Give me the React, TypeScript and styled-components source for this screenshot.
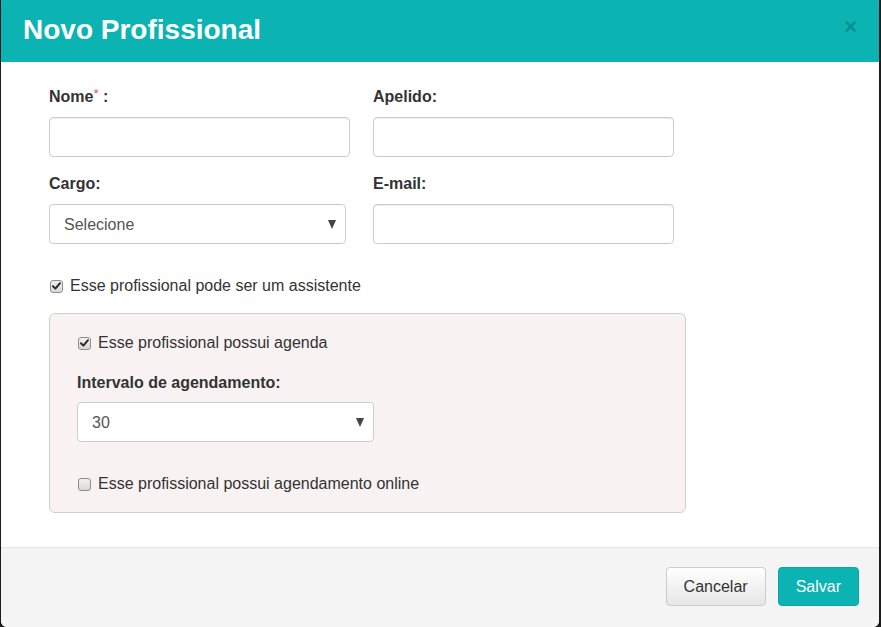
import React from "react";
import styled, { createGlobalStyle } from "styled-components";

const Global = createGlobalStyle`
  html, body { margin: 0; padding: 0; background: #1c1c1c; }
  body { font-family: "Liberation Sans", Arial, sans-serif; color: #333; overflow: hidden; }
  * { box-sizing: border-box; }
`;

const Modal = styled.div`
  width: 878px;
  height: 630px;
  margin: -3px 0 0 1px;
  background: #fff;
  border-radius: 6px;
  overflow: hidden;
  display: flex;
  flex-direction: column;
`;

const Header = styled.div`
  height: 65px;
  flex: none;
  padding: 1px 22px 0 22px;
  background: #0bb3b3;
  display: flex;
  align-items: center;
  justify-content: space-between;
`;

const Title = styled.h1`
  margin: 0;
  font-size: 28px;
  font-weight: bold;
  color: #fff;
`;

const Close = styled.button`
  border: 0;
  background: none;
  padding: 0;
  margin-right: 0;
  margin-top: -6px;
  font-family: "Liberation Sans", Arial, sans-serif;
  font-size: 22px;
  font-weight: bold;
  line-height: 1;
  color: #000;
  opacity: 0.2;
  cursor: pointer;
`;

const Body = styled.div`
  flex: 1;
  padding: 25px 0 34px 48px;
`;

const Grid = styled.div`
  display: grid;
  grid-template-columns: 301px 301px;
  column-gap: 23px;
  row-gap: 17px;
`;

const Field = styled.div`
  display: flex;
  flex-direction: column;
`;

const Label = styled.label`
  font-size: 16px;
  font-weight: bold;
  line-height: 20px;
  margin-bottom: 10px;
  color: #333;
`;

const Req = styled.span`
  color: #d9534f;
  font-size: 13px;
  font-weight: normal;
  vertical-align: top;
  line-height: 13px;
`;

const Input = styled.input`
  height: 40px;
  width: 100%;
  border: 1px solid #ccc;
  border-radius: 4px;
  padding: 0 14px;
  font-size: 16px;
  font-family: "Liberation Sans", Arial, sans-serif;
  color: #555;
  box-shadow: inset 0 1px 1px rgba(0, 0, 0, 0.075);
  outline: none;
`;

const SelectWrap = styled.div<{ $w: number }>`
  position: relative;
  width: ${(p) => p.$w}px;
`;

const Select = styled.select`
  appearance: none;
  -webkit-appearance: none;
  height: 40px;
  width: 100%;
  border: 1px solid #ccc;
  border-radius: 4px;
  padding: 0 14px;
  font-size: 16px;
  font-family: "Liberation Sans", Arial, sans-serif;
  color: #555;
  background: #fff;
  outline: none;
`;

const Arrow = styled.span`
  position: absolute;
  right: 10px;
  top: 16px;
  width: 0;
  height: 0;
  border-left: 4px solid transparent;
  border-right: 4px solid transparent;
  border-top: 9px solid #444;
  pointer-events: none;
`;

const CheckRow = styled.label<{ $mt: number; $ml?: number }>`
  display: flex;
  align-items: center;
  gap: 7px;
  margin-top: ${(p) => p.$mt}px;
  margin-left: ${(p) => p.$ml ?? 0}px;
  font-size: 16px;
  line-height: 20px;
  color: #333;
`;

const Box = styled.span`
  width: 13px;
  height: 13px;
  border: 1px solid #8e8e8e;
  border-radius: 3px;
  background: linear-gradient(#f1f1f1, #d8d8d8);
  display: flex;
  align-items: center;
  justify-content: center;
  flex: none;
`;

const Panel = styled.div`
  width: 637px;
  margin-top: 17px;
  border: 1px solid #cfcfcf;
  border-radius: 6px;
  background: #f9f2f2;
  padding: 19px 0 18px 27px;
`;

const PanelLabel = styled(Label)`
  display: block;
  margin-top: 20px;
  margin-bottom: 9px;
`;

const Footer = styled.div`
  height: 82px;
  flex: none;
  border-top: 1px solid #e5e5e5;
  background: #f4f4f4;
  padding: 19px 20px 0 0;
  display: flex;
  justify-content: flex-end;
  align-items: flex-start;
  gap: 12px;
`;

const Btn = styled.button<{ $primary?: boolean }>`
  height: 39px;
  padding: 0 17px;
  border-radius: 4px;
  font-size: 16px;
  font-family: "Liberation Sans", Arial, sans-serif;
  cursor: pointer;
  border: 1px solid ${(p) => (p.$primary ? "#0aa5a5" : "#ccc")};
  color: ${(p) => (p.$primary ? "#fff" : "#333")};
  background: ${(p) =>
    p.$primary ? "#0bb3b3" : "linear-gradient(#ffffff, #e6e6e6)"};
`;

function Check({ on, children, mt, ml }: { on: boolean; children: React.ReactNode; mt: number; ml?: number }) {
  return (
    <CheckRow $mt={mt} $ml={ml}>
      <Box>
        {on && (
          <svg width="9" height="8" viewBox="0 0 9 8">
            <path d="M1 4.2 L3.4 6.6 L8 1.2" fill="none" stroke="#2a2a2a" strokeWidth="2" strokeLinecap="round" strokeLinejoin="round" />
          </svg>
        )}
      </Box>
      {children}
    </CheckRow>
  );
}

export default function App() {
  return (
    <>
      <Global />
      <Modal>
        <Header>
          <Title>Novo Profissional</Title>
          <Close aria-label="Fechar">×</Close>
        </Header>
        <Body>
          <Grid>
            <Field>
              <Label>
                Nome<Req>*</Req> :
              </Label>
              <Input />
            </Field>
            <Field>
              <Label>Apelido:</Label>
              <Input />
            </Field>
            <Field>
              <Label>Cargo:</Label>
              <SelectWrap $w={297}>
                <Select defaultValue="">
                  <option value="">Selecione</option>
                </Select>
                <Arrow />
              </SelectWrap>
            </Field>
            <Field>
              <Label>E-mail:</Label>
              <Input />
            </Field>
          </Grid>
          <Check on mt={32} ml={1}>
            Esse profissional pode ser um assistente
          </Check>
          <Panel>
            <Check on mt={0} ml={1}>
              Esse profissional possui agenda
            </Check>
            <PanelLabel>Intervalo de agendamento:</PanelLabel>
            <SelectWrap $w={297}>
              <Select defaultValue="30">
                <option value="30">30</option>
              </Select>
              <Arrow />
            </SelectWrap>
            <Check on={false} mt={32} ml={1}>
              Esse profissional possui agendamento online
            </Check>
          </Panel>
        </Body>
        <Footer>
          <Btn>Cancelar</Btn>
          <Btn $primary>Salvar</Btn>
        </Footer>
      </Modal>
    </>
  );
}
